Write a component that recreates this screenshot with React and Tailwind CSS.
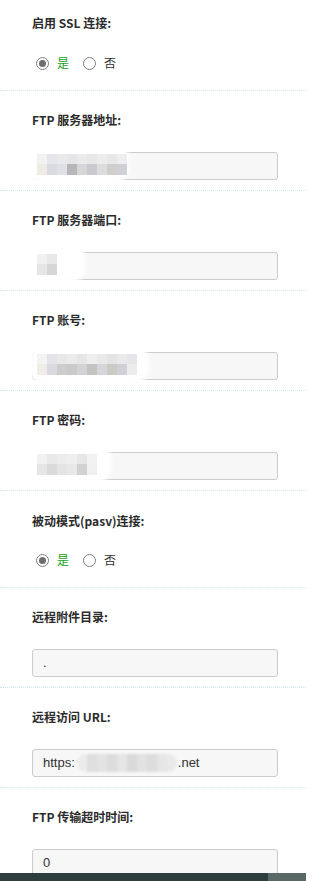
import React from 'react'

const labelFont = { fontFamily: '"Noto Sans CJK SC", "Liberation Sans", sans-serif' }

const addrTop = ['#f2f2f2', '#e4e6ea', '#e9e9ea', '#e6e6e8', '#ebebeb', '#e7e7e7', '#ececec', '#e8e8e8', '#eeeeee']
const addrBot = ['#efece6', '#d9dbe0', '#dde0e4', '#b7b7b9', '#d6d6d8', '#c8cad0', '#dcdcdc', '#d0cfcc', '#cfd0d5']
const portTop = ['#f0f0f0', '#e8e8e8']
const portBot = ['#e6e6e6', '#d6d6d8']
const userTop = ['#f3f3f3', '#e2e4e8', '#e8e8e8', '#ebebeb', '#e6e6e6', '#eeeeee', '#e9e9e9', '#e4e4e4', '#eaeaea', '#e6e6ea']
const userBot = ['#f0ede8', '#d8dae0', '#cdcdcd', '#c9cac9', '#d3d3d5', '#c3c3c0', '#d5d5da', '#cbcbc6', '#d0d0d6', '#ececec']
const pwdTop = ['#f1f1f1', '#e9e9e9', '#ececec', '#efefef', '#e7e7e7', '#f2f2f2']
const pwdBot = ['#e6e6e6', '#dadada', '#e4e4e4', '#e8e8e8', '#d2d2d2', '#f0f0f0']
const urlBlocks = ['#ececec', '#dedede', '#e3e3e3', '#dcdcdc', '#e5e5e5', '#dadada', '#e2e2e2', '#dddddd', '#e6e6e6', '#e9e9e9']

function Redacted({ top, bottom, blobClass }) {
    return (
        <div className="relative -ml-[6px] -mt-[4px]">
            <div className={'absolute bg-white rounded-[14px] blur-[2px] ' + blobClass}></div>
            <div className="relative flex flex-col">
                <div className="flex">
                    {top.map((c, i) => (
                        <div key={i} className="w-[10px] h-[10px]" style={{ background: c }}></div>
                    ))}
                </div>
                <div className="flex">
                    {bottom.map((c, i) => (
                        <div key={i} className="w-[10px] h-[11px]" style={{ background: c }}></div>
                    ))}
                </div>
            </div>
        </div>
    )
}

function Field({ children }) {
    return (
        <div className="w-[246px] h-[28px] bg-[#f7f7f7] border border-[#cccccc] rounded-[3px] flex items-center pl-[10px] text-[13px] text-[#333]" style={{ fontFamily: '"Liberation Sans", Arial, sans-serif' }}>
            {children}
        </div>
    )
}

function Radio({ checked, label, green }) {
    return (
        <div className="flex items-center">
            <span className="w-[13px] h-[13px] rounded-full border border-[#808080] bg-white flex items-center justify-center">
                {checked && <span className="w-[7px] h-[7px] rounded-full bg-[#6e6e6e]"></span>}
            </span>
            <span className={'ml-[8px] text-[12px] leading-[16px] ' + (green ? 'text-[#1aa01a]' : 'text-[#333]')} style={labelFont}>{label}</span>
        </div>
    )
}

function RadioSection({ label, first }) {
    return (
        <div className={'pl-[32px] border-b border-dotted border-[#d3e1e8] ' + (first ? 'pt-[14px] pb-[19px]' : 'pt-[21px] pb-[19px]')}>
            <div className="text-[12px] leading-[18px] font-bold text-[#2b2b2b]" style={labelFont}>{label}</div>
            <div className={'flex gap-[14px] h-[16px] items-center pl-[4px] ' + (first ? 'mt-[23px]' : 'mt-[22px]')}>
                <Radio checked label="是" green />
                <Radio label="否" />
            </div>
        </div>
    )
}

function InputSection({ label, children, last }) {
    return (
        <div className={'pl-[32px] pt-[20px] pb-[10px] ' + (last ? '' : 'border-b border-dotted border-[#d3e1e8]')}>
            <div className="text-[12px] leading-[18px] font-bold text-[#2b2b2b]" style={labelFont}>{label}</div>
            <div className="mt-[23px]">
                <Field>{children}</Field>
            </div>
        </div>
    )
}

export default function App() {
    return (
        <div className="w-[306px] min-h-[881px] bg-white">
            <RadioSection label="启用 SSL 连接:" first />
            <InputSection label="FTP 服务器地址:">
                <Redacted top={addrTop} bottom={addrBot} blobClass="-left-[12px] -right-[2px] -top-[10px] -bottom-[8px]" />
            </InputSection>
            <InputSection label="FTP 服务器端口:">
                <Redacted top={portTop} bottom={portBot} blobClass="-left-[12px] -right-[28px] -top-[10px] -bottom-[8px]" />
            </InputSection>
            <InputSection label="FTP 账号:">
                <Redacted top={userTop} bottom={userBot} blobClass="-left-[8px] -right-[12px] -top-[8px] -bottom-[8px]" />
            </InputSection>
            <InputSection label="FTP 密码:">
                <Redacted top={pwdTop} bottom={pwdBot} blobClass="-left-[12px] -right-[14px] -top-[10px] -bottom-[8px]" />
            </InputSection>
            <RadioSection label="被动模式(pasv)连接:" />
            <InputSection label="远程附件目录:">
                <span className="text-[#333]">.</span>
            </InputSection>
            <InputSection label="远程访问 URL:">
                <span>https:</span>
                <span className="ml-[2px] mr-[1px] flex h-[18px] rounded-[9px] overflow-hidden blur-[1px]">
                    {urlBlocks.map((c, i) => (
                        <span key={i} className="w-[10px]" style={{ background: c }}></span>
                    ))}
                </span>
                <span>.net</span>
            </InputSection>
            <InputSection label="FTP 传输超时时间:" last>
                <span>0</span>
            </InputSection>
            <div className="fixed left-0 bottom-0 w-[306px] h-[8px] flex">
                <div className="flex-1 bg-[#2e3e3c]"></div>
                <div className="w-[38px] bg-[#5a6966]"></div>
            </div>
        </div>
    )
}
